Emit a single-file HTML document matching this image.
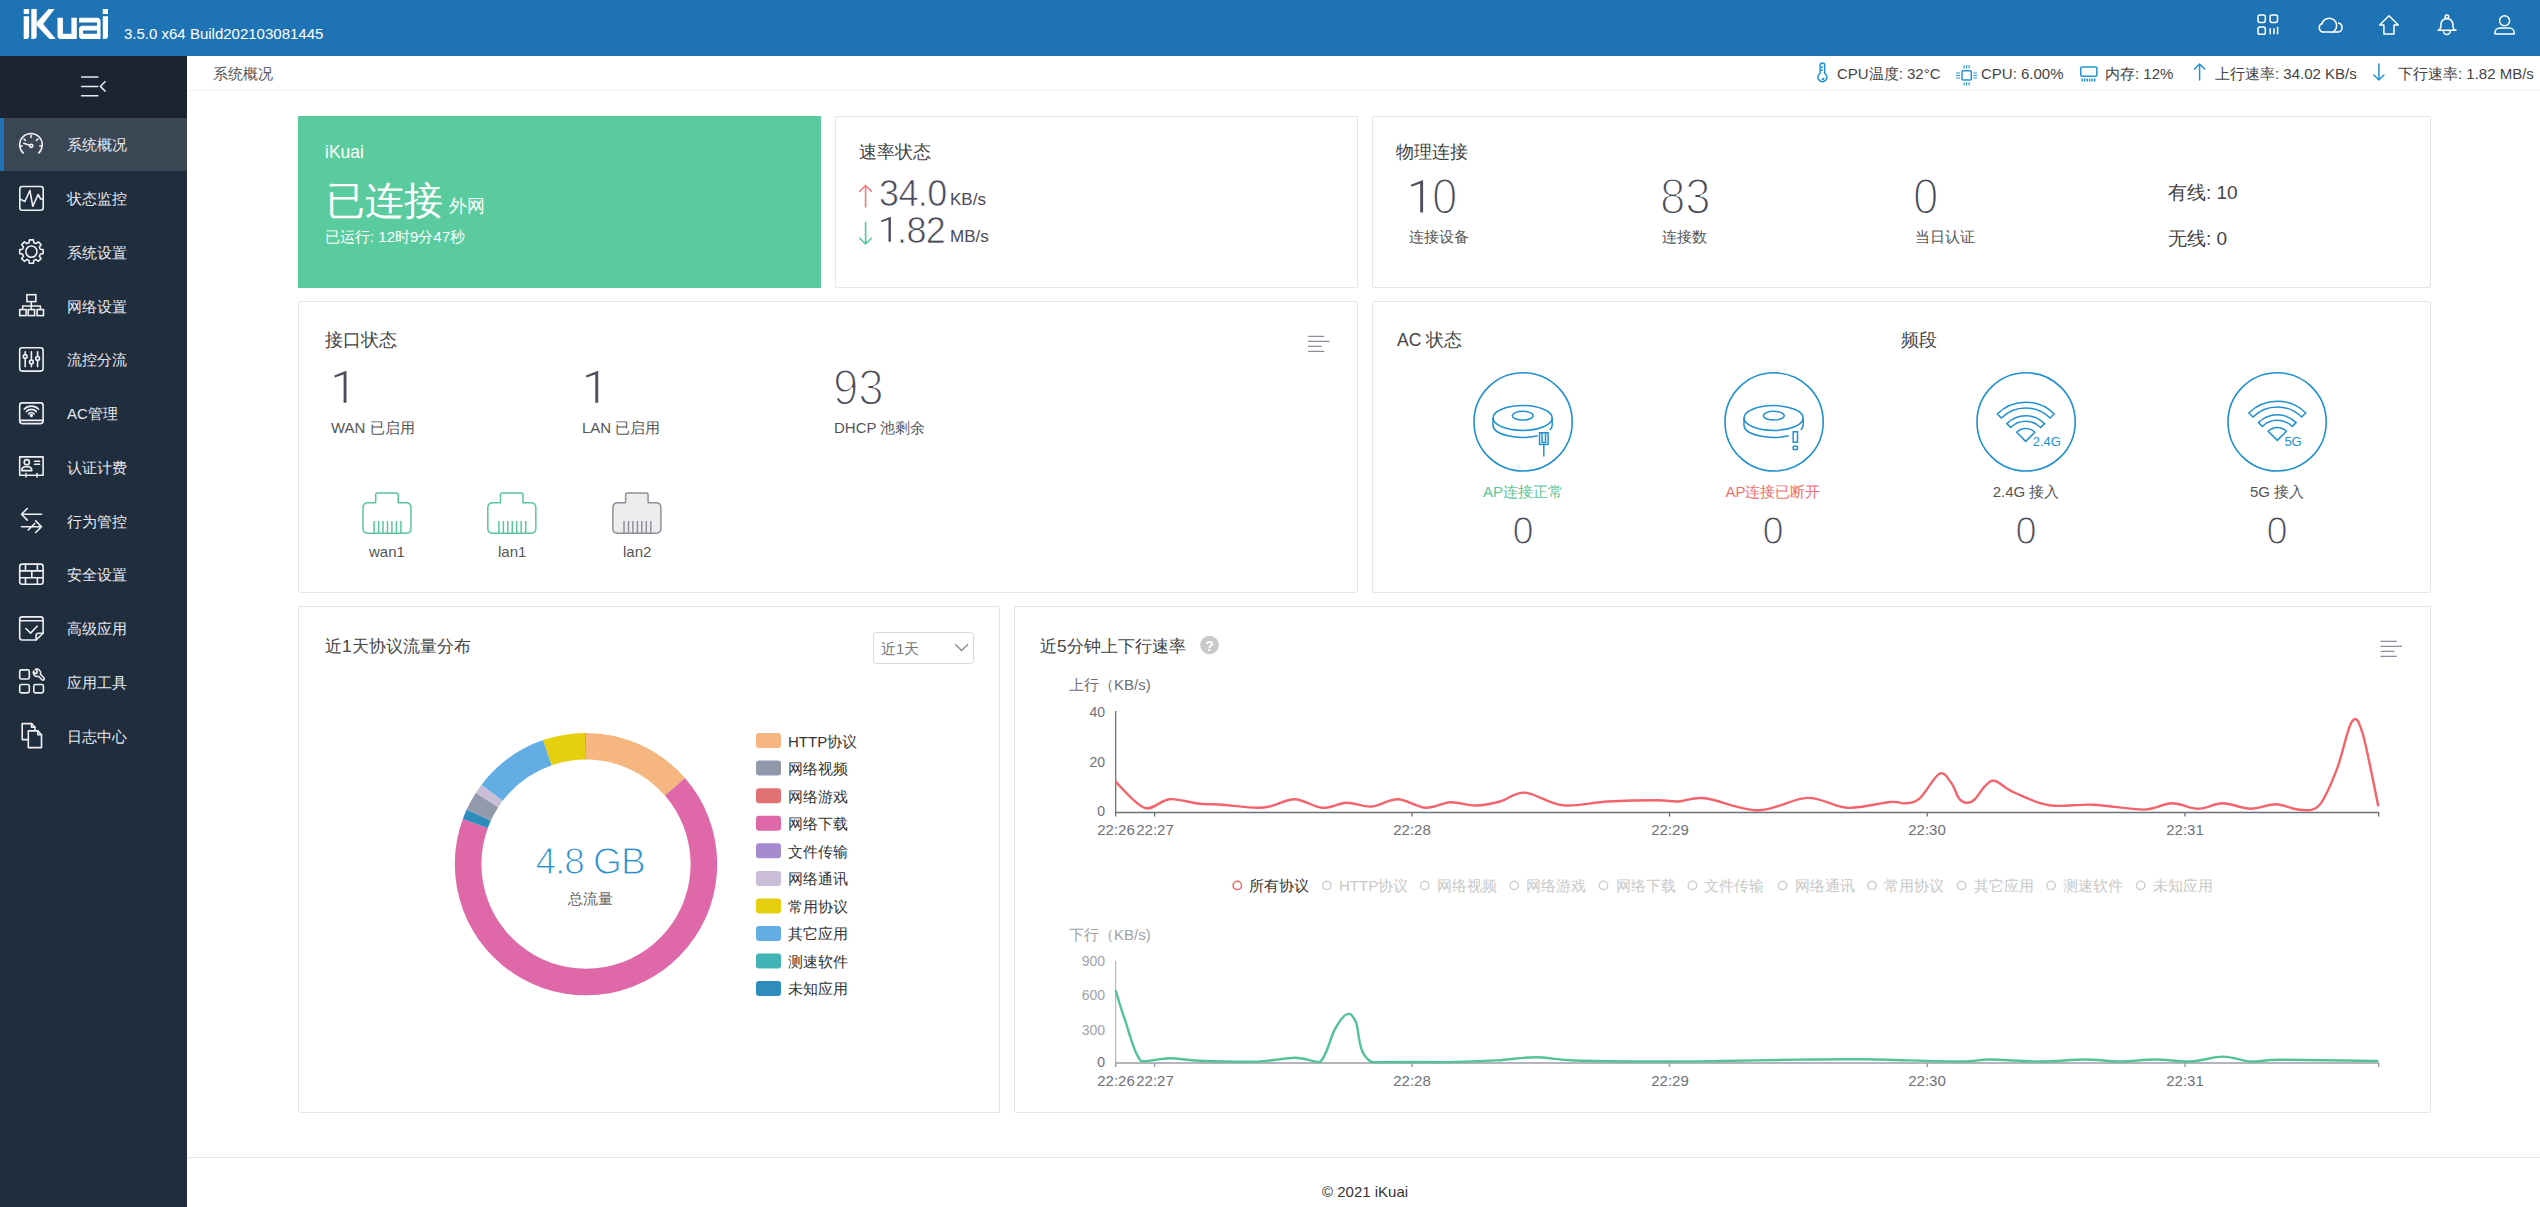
<!DOCTYPE html>
<html><head><meta charset="utf-8">
<style>
*{box-sizing:border-box;margin:0;padding:0}
html,body{width:2540px;height:1207px;overflow:hidden;background:#fff;font-family:"Liberation Sans",sans-serif;color:#333}
.a{position:absolute;white-space:nowrap}
#hdr{position:absolute;left:0;top:0;width:2540px;height:56px;background:#1e73b5}
#side{position:absolute;left:0;top:56px;width:187px;height:1151px;background:#202d3d}
#side .top{position:absolute;left:0;top:0;width:187px;height:62px;background:#1b2432}
.mi{position:absolute;left:0;width:187px;height:54px}
.mi.act{background:#3b4654}
.mi.act:before{content:"";position:absolute;left:0;top:0;width:4px;height:100%;background:#1e73b5}
.mi span{position:absolute;left:67px;top:18px;font-size:15px;line-height:15px;color:#e6e9ee}
.mi svg{position:absolute;left:17px;top:12px}
.card{position:absolute;border:1px solid #e6e6e6;border-radius:2px;background:#fff}
.ttl{position:absolute;font-size:17px;line-height:17px;color:#444}
</style></head><body>
<div id="hdr"></div>
<div id="side"><div class="top"></div></div>
<div class="a" style="left:0;top:118px;width:187px;height:53px;background:#3b4654"></div><div class="a" style="left:0;top:118px;width:4px;height:53px;background:#1e73b5"></div>
<div class="mi act" style="top:118.00px;height:53px"></div>
<div class="a" style="left:67px;top:137px;font-size:15px;line-height:15px;color:#e6e9ee">系统概况</div>
<div class="a" style="left:67px;top:191px;font-size:15px;line-height:15px;color:#e6e9ee">状态监控</div>
<div class="a" style="left:67px;top:245px;font-size:15px;line-height:15px;color:#e6e9ee">系统设置</div>
<div class="a" style="left:67px;top:299px;font-size:15px;line-height:15px;color:#e6e9ee">网络设置</div>
<div class="a" style="left:67px;top:352px;font-size:15px;line-height:15px;color:#e6e9ee">流控分流</div>
<div class="a" style="left:67px;top:406px;font-size:15px;line-height:15px;color:#e6e9ee">AC管理</div>
<div class="a" style="left:67px;top:460px;font-size:15px;line-height:15px;color:#e6e9ee">认证计费</div>
<div class="a" style="left:67px;top:514px;font-size:15px;line-height:15px;color:#e6e9ee">行为管控</div>
<div class="a" style="left:67px;top:567px;font-size:15px;line-height:15px;color:#e6e9ee">安全设置</div>
<div class="a" style="left:67px;top:621px;font-size:15px;line-height:15px;color:#e6e9ee">高级应用</div>
<div class="a" style="left:67px;top:675px;font-size:15px;line-height:15px;color:#e6e9ee">应用工具</div>
<div class="a" style="left:67px;top:729px;font-size:15px;line-height:15px;color:#e6e9ee">日志中心</div>

<!-- breadcrumb -->
<div class="a" style="left:188px;top:90px;width:2352px;height:1px;background:#f0f0f0"></div>
<div class="a" style="left:213px;top:66px;font-size:15px;line-height:15px;color:#555">系统概况</div>


<svg class="a" style="left:0;top:0" width="2540" height="1207" viewBox="0 0 2540 1207">
<!-- logo -->
<g fill="#fff">
<rect x="23.7" y="9" width="5.4" height="5"/>
<path d="M23.7,16.3H29.1V36Q29.1,39 26.1,39H23.7Z"/>
<path d="M31.3,9H36.7V36Q36.7,39 33.7,39H31.3Z"/>
<path d="M48.6,9H54.6L43.2,23.9L55.8,39H49.4L36.7,25.6V22.2Z"/>
<path d="M57.5,17.7H62.9V33.8H71.4V17.7H76.8V39H61Q57.5,39 57.5,35.5Z"/>
<path fill-rule="evenodd" d="M79,17.7H97Q100.5,17.7 100.5,21.2V39H82.5Q79,39 79,35.5V29.2Q79,25.7 82.5,25.7H97V22.6H79Z M83,30.5H97V33.8H83Z"/>
<rect x="102.8" y="9" width="5.2" height="5"/>
<path d="M102.8,16.3H108V36Q108,39 105,39H102.8Z"/>
</g>
<!-- header icons -->
<g fill="none" stroke="#fff" stroke-width="1.5" stroke-linejoin="round" stroke-linecap="round">
<rect x="2258" y="15" width="7.3" height="7.4" rx="1.8"/>
<rect x="2270.1" y="15" width="7.4" height="7.4" rx="1.8"/>
<rect x="2258" y="27.1" width="7.3" height="7.2" rx="1.8"/>
<path d="M2270.2,28.3V34.3M2274,28.3V34.3M2277.6,26.8V34.3" stroke-linecap="butt"/>
<path d="M2322.5,32.1A4.7,4.7 0 0 1 2321.9,23.4"/>
<path d="M2321.9,24.2A7.4,7.4 0 1 1 2332.8,32.1"/>
<path d="M2338.4,23A4.6,4.6 0 0 1 2337.4,32.1"/>
<path d="M2322.5,32.1H2337.4"/>
<path d="M2389,15.8L2398.3,25H2394V34H2383.9V25H2379.7Z"/>
<circle cx="2446.9" cy="16.8" r="1.8"/>
<path d="M2437.9,30.2H2456M2438.8,30.2Q2441,28.8 2441,24.3A5.9,5.9 0 0 1 2452.8,24.3Q2452.8,28.8 2455,30.2"/>
<path d="M2443.5,31A3.4,3.4 0 0 0 2450.3,31"/>
<circle cx="2504.6" cy="20.7" r="5"/>
<path d="M2495,34V32.5A5,4.5 0 0 1 2500,28H2509.2A5,4.5 0 0 1 2514.2,32.5V34Z"/>
</g>
<!-- status bar icons -->
<g fill="none" stroke="#2492d1" stroke-width="1.5" stroke-linecap="round" stroke-linejoin="round">
<path d="M1820.1,73.3V65.3A2.3,2.3 0 0 1 1824.7,65.3V73.3A4.5,4.5 0 1 1 1820.1,73.3Z"/>
<path d="M1820.8,67.3H1822.3M1820.8,70H1822.3M1823.8,78.2A1.8,1.8 0 0 1 1822,79.5"/>
<rect x="1962" y="70.8" width="9.3" height="9.2" rx="1"/>
<path d="M1964.1,65.2V68.6M1966.6,65.2V68.6M1969.1,65.2V68.6M1964.1,82.2V85.6M1966.6,82.2V85.6M1969.1,82.2V85.6M1956,73H1960M1956,75.5H1960M1956,78H1960M1973.3,73H1977M1973.3,75.5H1977M1973.3,78H1977" stroke-linecap="butt" stroke-width="1.1"/>
<rect x="2080.7" y="67" width="16.2" height="9.3" rx="1.5"/>
<path d="M2082.3,78.6V81.5M2084.8,78.6V81.5M2087.2,78.6V81.5M2089.7,78.6V81.5M2092.2,78.6V81.5M2094.7,78.6V81.5" stroke-linecap="butt"/>
<path d="M2199.6,64V80M2194.6,69L2199.6,64L2204.6,69"/>
<path d="M2378.9,64V80M2373.9,75L2378.9,80L2383.9,75"/>
</g>
<!-- sidebar collapse icon -->
<g fill="none" stroke="#e8eaee" stroke-width="1.5">
<path d="M81.1,77H98.4M81.1,86.4H98.4M81.1,95.8H98.4"/>
<path d="M105.5,81.3L100.4,86.4L105.5,91.5" stroke-linejoin="miter"/>
</g>
<!-- sidebar icons -->
<g fill="none" stroke="#eef0f3" stroke-width="1.6" stroke-linecap="round" stroke-linejoin="round">
<!-- gauge -->
<path d="M23,152.8A11.3,11.3 0 1 1 38.9,152.8"/>
<path d="M23,152.8L21.5,151.3M38.9,152.8L40.4,151.3M31,135.2V137.4M20,146H22.2M39.8,146H42M24,139L25.5,140.5M37.9,139L36.4,140.5M23.8,143.2L29.6,145.2"/>
<circle cx="31.2" cy="145.8" r="1.6"/>
<!-- monitor -->
<rect x="19.8" y="186.5" width="23.4" height="23.8" rx="2.5"/>
<path d="M19.8,199L24.9,201.5L29.9,190.5L32.8,206.3L38.1,194.5L40.6,199H43.2"/>
<!-- gear -->
<path d="M29.0,242.7 L29.4,239.9 L33.4,239.9 L33.8,242.7 L36.0,243.6 L38.4,241.9 L41.1,244.6 L39.4,247.0 L40.3,249.2 L43.1,249.6 L43.1,253.6 L40.3,254.0 L39.4,256.2 L41.1,258.6 L38.4,261.3 L36.0,259.6 L33.8,260.5 L33.4,263.3 L29.4,263.3 L29.0,260.5 L26.8,259.6 L24.4,261.3 L21.7,258.6 L23.4,256.2 L22.5,254.0 L19.7,253.6 L19.7,249.6 L22.5,249.2 L23.4,247.0 L21.7,244.6 L24.4,241.9 L26.8,243.6Z"/>
<circle cx="31.4" cy="251.6" r="5.6"/>
<!-- network -->
<rect x="26.9" y="294.7" width="8.9" height="6.9" stroke-linejoin="miter"/>
<path d="M31.3,301.6V306M22.7,309.6V306H40.4V309.6M31.3,306V309.6" stroke-linecap="butt"/>
<rect x="19.7" y="309.6" width="6.4" height="6" stroke-linejoin="miter"/>
<rect x="28.2" y="309.6" width="6.4" height="6" stroke-linejoin="miter"/>
<rect x="37.1" y="309.6" width="6.4" height="6" stroke-linejoin="miter"/>
<!-- sliders -->
<rect x="19.7" y="347.7" width="23.4" height="23.4" rx="2.5"/>
<path d="M25.2,351.8V354.6M25.2,358.4V366.6M31.4,351.8V360M31.4,364V366.6M37.6,351.8V356.4M37.6,360.4V366.6"/>
<circle cx="25.2" cy="356.5" r="1.9"/>
<circle cx="31.4" cy="362" r="1.9"/>
<circle cx="37.6" cy="358.4" r="1.9"/>
<!-- AC -->
<rect x="19.7" y="402.9" width="23.4" height="20.7" rx="2.5"/>
<path d="M19.7,420.4H43.1"/>
<path d="M24.2,409.2A10,10 0 0 1 38.6,409.2M26.4,411.6A6.8,6.8 0 0 1 36.4,411.6M28.6,413.9A3.6,3.6 0 0 1 34.2,413.9"/>
<circle cx="31.4" cy="415.5" r="0.9"/>
<!-- id card -->
<path d="M24.5,475.3H19.7V456.9H43.1V475.3H38.5M27.5,475.3H35.5M26,473.5V477M37,473.5V477"/>
<circle cx="26.8" cy="462.2" r="2.6"/>
<path d="M21.8,470.6Q21.8,467.4 24.6,466.8H29Q31.8,467.4 31.8,470.6Z"/>
<path d="M34.6,461.2H39.6M34.6,464.3H39.6"/>
<!-- arrows -->
<path d="M21.5,514.3H41.5M27.3,508.5L21.5,514.3L27.3,520.1M21.5,526.7H41.5M35.7,520.9L41.5,526.7L35.7,532.5M28.2,530L34.7,523.5"/>
<!-- brick -->
<rect x="19.7" y="564.1" width="23.4" height="20.1" rx="2.5"/>
<path d="M19.7,570.9H43.1M19.7,577.7H43.1M25.5,564.1V570.9M37.4,564.1V570.9M31.8,570.9V577.7M25.5,577.7V584.2M37.4,577.7V584.2"/>
<!-- calendar -->
<path d="M22.2,616.9H40.6Q43.1,616.9 43.1,619.4V633.2L36.1,640H22.2Q19.7,640 19.7,637.5V619.4Q19.7,616.9 22.2,616.9Z"/>
<path d="M19.7,620.7H43.1M36.1,640V635.6Q36.1,633.2 38.5,633.2H43.1M25.9,628.5L30.6,633.1L37.2,626.2"/>
<!-- apps -->
<rect x="19.7" y="669.9" width="9.6" height="9.1" rx="1.6"/>
<rect x="19.7" y="684.5" width="9.6" height="8.4" rx="1.6"/>
<rect x="33.8" y="684.5" width="9.6" height="8.4" rx="1.6"/>
<path d="M35.4,669.3L37.3,671.6L36.6,673.4L34.4,673.1L33.6,670.9A4,4 0 0 0 38.5,676.3L41.9,679.7A1.4,1.4 0 0 0 43.9,677.7L40.5,674.3A4,4 0 0 0 35.4,669.3Z"/>
<!-- docs -->
<path d="M27.9,739.6H22.2V723.6H31.5L35,727.2V730.6"/>
<path d="M31.5,723.6V727.2H35" />
<path d="M28.3,730.9H37.8L41.5,734.7V747.6H28.3Z"/>
<path d="M37.8,730.9V734.7H41.5"/>
</g>
</svg>

<div class="a" style="left:124px;top:26px;font-size:15px;line-height:15px;color:#fff">3.5.0 x64 Build202103081445</div>
<div class="a" style="left:1837px;top:66px;font-size:15px;line-height:15px;color:#444">CPU温度: 32°C</div>
<div class="a" style="left:1981px;top:66px;font-size:15px;line-height:15px;color:#444">CPU: 6.00%</div>
<div class="a" style="left:2105px;top:66px;font-size:15px;line-height:15px;color:#444">内存: 12%</div>
<div class="a" style="left:2215px;top:66px;font-size:15px;line-height:15px;color:#444">上行速率: 34.02 KB/s</div>
<div class="a" style="left:2398px;top:66px;font-size:15px;line-height:15px;color:#444">下行速率: 1.82 MB/s</div>

<!-- cards -->
<div class="a" style="left:298px;top:116px;width:523px;height:172px;background:#5acb9e"></div>
<div class="card" style="left:835px;top:116px;width:523px;height:172px"></div>
<div class="card" style="left:1372px;top:116px;width:1059px;height:172px"></div>
<div class="card" style="left:298px;top:301px;width:1060px;height:292px"></div>
<div class="card" style="left:1372px;top:301px;width:1059px;height:292px"></div>
<div class="card" style="left:298px;top:606px;width:702px;height:507px"></div>
<div class="card" style="left:1014px;top:606px;width:1417px;height:507px"></div>


<!-- row1 content -->
<div class="a" style="left:325px;top:143px;font-size:17.5px;line-height:18px;color:#fff">iKuai</div>
<div class="a" style="left:326px;top:181px;font-size:39px;line-height:40px;color:#fff">已连接</div>
<div class="a" style="left:449px;top:197px;font-size:18px;line-height:18px;color:#fff">外网</div>
<div class="a" style="left:325px;top:229px;font-size:15px;line-height:15px;color:#fff">已运行: 12时9分47秒</div>

<div class="a" style="left:859px;top:144px;font-size:17.5px;line-height:17px;color:#444">速率状态</div>
<div class="a" style="left:879px;top:176px;font-size:36px;line-height:36px;color:#4a4a57;-webkit-text-stroke:0.7px #fff;letter-spacing:-0.6px">34.0</div>
<div class="a" style="left:950px;top:191px;font-size:17px;line-height:17px;color:#4a4a57">KB/s</div>
<div class="a" style="left:897px;top:213px;font-size:36px;line-height:36px;color:#4a4a57;-webkit-text-stroke:0.7px #fff;letter-spacing:-0.6px">.82</div>
<div class="a" style="left:950px;top:228px;font-size:17px;line-height:17px;color:#4a4a57">MB/s</div>

<div class="a" style="left:1396px;top:144px;font-size:17.5px;line-height:17px;color:#444">物理连接</div>
<div class="a" style="left:1432.4px;top:171px;font-size:47px;line-height:47px;color:#4a4a57;-webkit-text-stroke:1.7px #fff;transform:scale(0.97,1.07);transform-origin:0 0">0</div>
<div class="a" style="left:1409px;top:229px;font-size:15px;line-height:15px;color:#555">连接设备</div>
<div class="a" style="left:1660px;top:171px;font-size:47px;line-height:47px;color:#4a4a57;-webkit-text-stroke:1.7px #fff;transform:scale(0.97,1.07);transform-origin:0 0">83</div>
<div class="a" style="left:1662px;top:229px;font-size:15px;line-height:15px;color:#555">连接数</div>
<div class="a" style="left:1913px;top:171px;font-size:47px;line-height:47px;color:#4a4a57;-webkit-text-stroke:1.7px #fff;transform:scale(0.97,1.07);transform-origin:0 0">0</div>
<div class="a" style="left:1915px;top:229px;font-size:15px;line-height:15px;color:#555">当日认证</div>
<div class="a" style="left:2168px;top:183px;font-size:19px;line-height:19px;color:#444">有线: 10</div>
<div class="a" style="left:2168px;top:229px;font-size:19px;line-height:19px;color:#444">无线: 0</div>

<svg class="a" style="left:0;top:0" width="2540" height="1207" viewBox="0 0 2540 1207">
<g fill="none" stroke-width="1.6" stroke-linecap="round" stroke-linejoin="round">
<path stroke="#f07a80" d="M865.6,185.5V207M859.8,191.3L865.6,185.5L871.4,191.3"/>
<path stroke="#5ac79b" d="M865.6,222.5V244M859.8,238.2L865.6,244L871.4,238.2"/>
</g>
</svg>


<!-- row2 left -->
<svg class="a" style="left:0;top:0" width="2540" height="1207" viewBox="0 0 2540 1207"><path fill="#4f4f5c" d="M343.6,402.7V374.4L334.8,377.6L334.3,375.5L345.7,371.0H346.5V402.7ZM595.3,402.7V374.4L586.5,377.6L586.0,375.5L597.4,371.0H598.2V402.7ZM1420.2,212.4V183.6L1411.4,186.8L1410.9,184.7L1422.3,180.2H1423.1V212.4ZM888.5,241.8V219.7L881.5,222.3L881.1,220.6L890.2,217.0H890.9V241.8Z"/></svg>

<div class="a" style="left:325px;top:332px;font-size:17.5px;line-height:17px;color:#444">接口状态</div>
<div class="a" style="left:331px;top:420px;font-size:15px;line-height:15px;color:#555">WAN 已启用</div>
<div class="a" style="left:582px;top:420px;font-size:15px;line-height:15px;color:#555">LAN 已启用</div>
<div class="a" style="left:833px;top:362px;font-size:47px;line-height:47px;color:#4a4a57;-webkit-text-stroke:1.7px #fff;transform:scale(0.97,1.07);transform-origin:0 0">93</div>
<div class="a" style="left:834px;top:420px;font-size:15px;line-height:15px;color:#555">DHCP 池剩余</div>
<div class="a" style="left:369px;top:544px;font-size:15px;line-height:15px;color:#555">wan1</div>
<div class="a" style="left:498px;top:544px;font-size:15px;line-height:15px;color:#555">lan1</div>
<div class="a" style="left:623px;top:544px;font-size:15px;line-height:15px;color:#555">lan2</div>
<!-- row2 right -->
<div class="a" style="left:1397px;top:332px;font-size:17.5px;line-height:17px;color:#444">AC 状态</div>
<div class="a" style="left:1901px;top:332px;font-size:17.5px;line-height:17px;color:#444">频段</div>
<div class="a" style="left:1473px;top:484px;width:100px;text-align:center;font-size:15px;line-height:15px;color:#5ac79b">AP连接正常</div>
<div class="a" style="left:1723px;top:484px;width:100px;text-align:center;font-size:15px;line-height:15px;color:#f06e6e">AP连接已断开</div>
<div class="a" style="left:1976px;top:484px;width:100px;text-align:center;font-size:15px;line-height:15px;color:#555">2.4G 接入</div>
<div class="a" style="left:2227px;top:484px;width:100px;text-align:center;font-size:15px;line-height:15px;color:#555">5G 接入</div>
<div class="a" style="left:1473px;top:512px;width:100px;text-align:center;font-size:38px;line-height:38px;color:#4a4a57;-webkit-text-stroke:1.2px #fff">0</div>
<div class="a" style="left:1723px;top:512px;width:100px;text-align:center;font-size:38px;line-height:38px;color:#4a4a57;-webkit-text-stroke:1.2px #fff">0</div>
<div class="a" style="left:1976px;top:512px;width:100px;text-align:center;font-size:38px;line-height:38px;color:#4a4a57;-webkit-text-stroke:1.2px #fff">0</div>
<div class="a" style="left:2227px;top:512px;width:100px;text-align:center;font-size:38px;line-height:38px;color:#4a4a57;-webkit-text-stroke:1.2px #fff">0</div>
<svg class="a" style="left:0;top:0" width="2540" height="1207" viewBox="0 0 2540 1207"><g transform="translate(362.3,492.3)" fill="#fff" stroke="#5ac79b" stroke-width="1.5" stroke-linejoin="round"><path d="M13.4,10.5V2.5Q13.4,0.8 15.1,0.8H34.2Q35.9,0.8 35.9,2.5V10.5H43.7Q48.7,10.5 48.7,15.5V36.3Q48.7,40.9 44.1,40.9H5.3Q0.7,40.9 0.7,36.3V15.5Q0.7,10.5 5.7,10.5Z"/><path fill="none" d="M11.8,28.6V40.9M16.3,28.6V40.9M20.7,28.6V40.9M25.2,28.6V40.9M29.6,28.6V40.9M34.1,28.6V40.9M38.6,28.6V40.9"/></g><g transform="translate(487.1,492.3)" fill="#fff" stroke="#5ac79b" stroke-width="1.5" stroke-linejoin="round"><path d="M13.4,10.5V2.5Q13.4,0.8 15.1,0.8H34.2Q35.9,0.8 35.9,2.5V10.5H43.7Q48.7,10.5 48.7,15.5V36.3Q48.7,40.9 44.1,40.9H5.3Q0.7,40.9 0.7,36.3V15.5Q0.7,10.5 5.7,10.5Z"/><path fill="none" d="M11.8,28.6V40.9M16.3,28.6V40.9M20.7,28.6V40.9M25.2,28.6V40.9M29.6,28.6V40.9M34.1,28.6V40.9M38.6,28.6V40.9"/></g><g transform="translate(612.2,492.3)" fill="#ededed" stroke="#8e909c" stroke-width="1.5" stroke-linejoin="round"><path d="M13.4,10.5V2.5Q13.4,0.8 15.1,0.8H34.2Q35.9,0.8 35.9,2.5V10.5H43.7Q48.7,10.5 48.7,15.5V36.3Q48.7,40.9 44.1,40.9H5.3Q0.7,40.9 0.7,36.3V15.5Q0.7,10.5 5.7,10.5Z"/><path fill="none" d="M11.8,28.6V40.9M16.3,28.6V40.9M20.7,28.6V40.9M25.2,28.6V40.9M29.6,28.6V40.9M34.1,28.6V40.9M38.6,28.6V40.9"/></g><g stroke="#8a8d9d" stroke-width="1.2"><path d="M1308.1,336.4H1324.3M1308.1,341.4H1329.5M1308.1,346.4H1321.8M1308.1,351.3H1324.3"/></g><circle cx="1523.1" cy="421.9" r="49.1" fill="none" stroke="#2190cf" stroke-width="1.6"/><circle cx="1774.1" cy="421.9" r="49.1" fill="none" stroke="#2190cf" stroke-width="1.6"/><circle cx="2026.1" cy="421.9" r="49.1" fill="none" stroke="#2190cf" stroke-width="1.6"/><circle cx="2277.1" cy="421.9" r="49.1" fill="none" stroke="#2190cf" stroke-width="1.6"/></svg>
<svg class="a" style="left:0;top:0" width="2540" height="1207" viewBox="0 0 2540 1207"><g transform="translate(1473.2,372.1)" fill="none" stroke="#2190cf" stroke-width="1.5"><ellipse cx="49.4" cy="45.9" rx="29.6" ry="12.4"/><ellipse cx="49.6" cy="43.6" rx="10.4" ry="4.4"/><path d="M19.8,45.9V53A29.6,12.3 0 0 0 64.5,63.6M79,45.9V53A29.6,12.3 0 0 1 76.6,57.9"/><rect x="66.35" y="60.65" width="8.5" height="11.7"/><path d="M68.9,60.65V70.3H72.3V60.65M70.6,72.35V84.5"/></g><g transform="translate(1724.2,372.1)" fill="none" stroke="#2190cf" stroke-width="1.5"><ellipse cx="49.4" cy="45.9" rx="29.6" ry="12.4"/><ellipse cx="49.6" cy="43.6" rx="10.4" ry="4.4"/><path d="M19.8,45.9V53A29.6,12.3 0 0 0 64.5,63.6M79,45.9V53A29.6,12.3 0 0 1 76.6,57.9"/><rect x="69" y="59.7" width="4.3" height="10.4"/><rect x="69" y="74.2" width="4.3" height="3.2" rx="0.8"/></g><g transform="translate(1976.2,372.1)" fill="none" stroke="#2190cf" stroke-width="1.5" stroke-linejoin="miter"><path d="M21.04,41.84A40.25,40.25 0 0 1 77.96,41.84L73.86,45.94A34.45,34.45 0 0 0 25.14,45.94ZM30.73,51.53A26.55,26.55 0 0 1 68.27,51.53L64.46,55.34A21.15,21.15 0 0 0 34.54,55.34ZM49.50,69.30L40.41,60.21A12.85,12.85 0 0 1 58.59,60.21Z"/><text x="56.5" y="74.4" fill="#2190cf" stroke="none" font-family="Liberation Sans" font-size="13">2.4G</text></g><g transform="translate(2227.2,372.1)" fill="none" stroke="#2190cf" stroke-width="1.5" stroke-linejoin="miter"><path d="M21.64,40.84A40.25,40.25 0 0 1 78.56,40.84L74.46,44.94A34.45,34.45 0 0 0 25.74,44.94ZM31.33,50.53A26.55,26.55 0 0 1 68.87,50.53L65.06,54.34A21.15,21.15 0 0 0 35.14,54.34ZM50.10,68.30L41.01,59.21A12.85,12.85 0 0 1 59.19,59.21Z"/><text x="57.2" y="73.5" fill="#2190cf" stroke="none" font-family="Liberation Sans" font-size="13">5G</text></g></svg>
<!-- row3 -->
<svg class="a" style="left:0;top:0" width="2540" height="1207" viewBox="0 0 2540 1207">
<path fill="#f5b77f" d="M586.00,732.90A131.2,131.2 0 0 1 685.02,778.03L664.94,795.48A104.6,104.6 0 0 0 586.00,759.50Z"/>
<path fill="#de68a8" d="M685.02,778.03A131.2,131.2 0 1 1 462.79,819.01L487.77,828.15A104.6,104.6 0 1 0 664.94,795.48Z"/>
<path fill="#2f8dbd" d="M462.79,819.01A131.2,131.2 0 0 1 466.71,809.48L490.89,820.56A104.6,104.6 0 0 0 487.77,828.15Z"/>
<path fill="#9299aa" d="M466.71,809.48A131.2,131.2 0 0 1 475.97,792.64L498.28,807.13A104.6,104.6 0 0 0 490.89,820.56Z"/>
<path fill="#c9bdd8" d="M475.97,792.64A131.2,131.2 0 0 1 481.50,784.78L502.68,800.86A104.6,104.6 0 0 0 498.28,807.13Z"/>
<path fill="#62ade4" d="M481.50,784.78A131.2,131.2 0 0 1 543.07,740.12L551.77,765.26A104.6,104.6 0 0 0 502.68,800.86Z"/>
<path fill="#e5cf0e" d="M543.07,740.12A131.2,131.2 0 0 1 585.08,732.90L585.27,759.50A104.6,104.6 0 0 0 551.77,765.26Z"/>
<path fill="#a58fcf" d="M585.08,732.90A131.2,131.2 0 0 1 586.00,732.90L586.00,759.50A104.6,104.6 0 0 0 585.27,759.50Z"/>
<rect x="756" y="733.1" width="25" height="15" rx="3" fill="#f5b77f"/>
<rect x="756" y="760.6" width="25" height="15" rx="3" fill="#9299aa"/>
<rect x="756" y="788.2" width="25" height="15" rx="3" fill="#e07274"/>
<rect x="756" y="815.8" width="25" height="15" rx="3" fill="#de68a8"/>
<rect x="756" y="843.3" width="25" height="15" rx="3" fill="#a68bd0"/>
<rect x="756" y="870.9" width="25" height="15" rx="3" fill="#c9bdd8"/>
<rect x="756" y="898.4" width="25" height="15" rx="3" fill="#e5cf0e"/>
<rect x="756" y="926.0" width="25" height="15" rx="3" fill="#62ade4"/>
<rect x="756" y="953.5" width="25" height="15" rx="3" fill="#41b3b6"/>
<rect x="756" y="981.1" width="25" height="15" rx="3" fill="#2f8dbd"/>
<rect x="873.5" y="632.5" width="100" height="31" rx="3" fill="#fff" stroke="#d9d9d9" stroke-width="1"/>
<path d="M955.2,644.2L961.6,650.5L968,644.2" fill="none" stroke="#8a8d9a" stroke-width="1.5"/>
<circle cx="1209.5" cy="645" r="9.3" fill="#c8c9cb"/>
<text x="1209.5" y="650.5" text-anchor="middle" fill="#fff" font-family="Liberation Sans" font-weight="bold" font-size="14">?</text>
<g stroke="#8a8d9d" stroke-width="1.2"><path d="M2380.6,641.4H2396.8M2380.6,646.4H2402M2380.6,651.4H2394.3M2380.6,656.3H2396.8"/></g>
<path d="M1115.7,711V812.5M1115.2,812.5H2379M1115.7,812V816.5M1154.6,812V816.5M1412,812V816.5M1669.5,812V816.5M1927.2,812V816.5M2185,812V816.5M2378.7,812V816.5" fill="none" stroke="#6e7079" stroke-width="1.3"/>
<path d="M1115.7,961V1063" fill="none" stroke="#a8aab2" stroke-width="1"/>
<path d="M1115.2,1063H2379M1115.7,1063V1067M1154.6,1063V1067M1412,1063V1067M1669.5,1063V1067M1927.2,1063V1067M2185,1063V1067M2378.7,1063V1067" fill="none" stroke="#9a9ca6" stroke-width="1.5"/>
<path d="M1115.7,781.8C1120.5,786.1 1135.6,804.9 1144.6,807.8C1153.5,810.7 1160.3,799.9 1169.4,799.2C1178.5,798.5 1190.9,802.9 1199.2,803.8C1207.5,804.7 1209.3,803.8 1219.0,804.5C1228.7,805.2 1248.3,807.6 1257.1,807.8C1265.9,808.0 1265.7,807.2 1272.0,805.8C1278.3,804.4 1286.7,798.9 1295.1,799.2C1303.5,799.5 1313.9,807.2 1322.4,807.8C1331.0,808.4 1338.3,803.0 1346.4,802.8C1354.5,802.6 1362.7,807.2 1371.2,806.6C1379.7,806.0 1388.5,799.0 1397.6,799.2C1406.7,799.4 1416.9,807.3 1425.7,807.8C1434.5,808.3 1442.2,802.6 1450.5,802.2C1458.8,801.8 1467.0,805.6 1475.3,805.5C1483.5,805.4 1491.8,803.6 1500.0,801.5C1508.2,799.4 1514.3,792.0 1524.8,792.6C1535.3,793.2 1549.0,803.8 1562.8,805.3C1576.6,806.8 1591.8,802.3 1607.5,801.5C1623.2,800.7 1645.2,800.3 1657.0,800.3C1668.8,800.3 1670.6,801.9 1678.6,801.5C1686.6,801.1 1691.8,796.7 1705.0,798.2C1718.2,799.7 1740.9,810.3 1758.0,810.3C1775.1,810.2 1792.6,798.3 1807.5,797.9C1822.4,797.5 1833.4,807.1 1847.2,807.8C1861.0,808.5 1880.4,802.8 1890.2,802.0C1900.0,801.2 1901.0,803.9 1905.9,803.3C1910.8,802.7 1914.1,803.3 1919.7,798.4C1925.3,793.5 1934.2,776.4 1939.4,773.8C1944.7,771.2 1947.9,778.6 1951.2,782.7C1954.5,786.8 1956.4,795.0 1959.0,798.4C1961.6,801.8 1964.3,802.6 1966.9,802.8C1969.5,803.0 1971.8,802.1 1974.8,799.4C1977.8,796.7 1981.3,789.7 1984.6,786.6C1987.9,783.5 1989.6,779.7 1994.5,780.7C1999.4,781.7 2005.0,788.4 2014.2,792.5C2023.4,796.6 2036.5,803.3 2049.6,805.3C2062.7,807.3 2077.2,804.0 2092.9,804.7C2108.7,805.4 2131.0,809.8 2144.1,809.6C2157.2,809.4 2162.7,803.4 2171.7,803.3C2180.7,803.1 2189.7,808.7 2198.2,808.7C2206.7,808.7 2214.1,803.3 2222.8,803.3C2231.5,803.3 2241.5,808.5 2250.4,808.7C2259.3,808.9 2267.8,804.1 2276.0,804.3C2284.2,804.5 2292.4,809.6 2299.6,809.8C2306.8,810.0 2313.1,812.1 2319.3,805.3C2325.5,798.5 2331.6,782.8 2337.0,768.9C2342.4,755.0 2347.5,727.6 2351.8,721.7C2356.1,715.8 2358.2,719.4 2362.6,733.5C2367.0,747.6 2375.7,794.2 2378.3,806.3" fill="none" stroke="#f3636b" stroke-width="2.4" stroke-linejoin="round"/>
<path d="M1115.7,990.5C1117.2,995.3 1120.5,1007.6 1124.8,1019.4C1129.1,1031.2 1133.9,1054.6 1141.3,1061.1C1148.7,1062.0 1159.8,1058.3 1169.4,1058.3C1179.1,1058.2 1184.6,1060.2 1199.2,1060.8C1213.8,1061.3 1241.1,1062.0 1257.1,1061.6C1273.1,1061.1 1284.6,1057.7 1295.1,1057.8C1305.6,1057.9 1313.3,1062.0 1319.9,1062.1C1326.5,1057.4 1330.4,1037.3 1334.8,1029.4C1339.2,1021.5 1343.0,1015.9 1346.4,1014.5C1349.9,1013.1 1351.2,1013.2 1355.5,1021.1C1359.8,1029.0 1356.7,1055.3 1372.0,1062.1C1387.3,1062.0 1426.4,1062.0 1447.2,1062.1C1468.0,1061.8 1482.1,1061.2 1496.8,1060.4C1511.5,1059.6 1522.4,1057.2 1535.4,1057.2C1548.4,1057.2 1555.9,1059.8 1575.0,1060.5C1594.1,1061.2 1625.8,1061.4 1650.0,1061.5C1674.2,1061.6 1695.3,1061.3 1720.0,1061.0C1744.7,1060.7 1774.1,1059.9 1798.0,1059.6C1821.9,1059.3 1836.8,1059.0 1863.6,1059.3C1890.4,1059.6 1938.0,1061.5 1959.0,1061.5C1980.0,1061.5 1975.9,1059.5 1989.3,1059.5C2002.7,1059.5 2023.7,1061.5 2039.6,1061.5C2055.5,1061.5 2071.5,1059.5 2084.9,1059.5C2098.3,1059.5 2108.3,1061.5 2120.0,1061.5C2131.7,1061.5 2143.6,1059.5 2155.3,1059.5C2167.1,1059.5 2179.2,1062.0 2190.5,1061.5C2201.8,1061.0 2213.1,1056.6 2223.2,1056.6C2233.3,1056.6 2241.3,1061.0 2250.9,1061.5C2260.5,1062.0 2259.8,1059.9 2281.0,1059.8C2302.2,1059.7 2362.1,1060.8 2378.3,1061.0" fill="none" stroke="#52c397" stroke-width="2.4" stroke-linejoin="round"/>
<circle cx="1237.3" cy="885.4" r="4.2" fill="none" stroke="#f0686e" stroke-width="1.5"/>
<circle cx="1326.9" cy="885.4" r="4.2" fill="none" stroke="#cfcfcf" stroke-width="1.5"/>
<circle cx="1424.7" cy="885.4" r="4.2" fill="none" stroke="#cfcfcf" stroke-width="1.5"/>
<circle cx="1514.3" cy="885.4" r="4.2" fill="none" stroke="#cfcfcf" stroke-width="1.5"/>
<circle cx="1603.5" cy="885.4" r="4.2" fill="none" stroke="#cfcfcf" stroke-width="1.5"/>
<circle cx="1692.4" cy="885.4" r="4.2" fill="none" stroke="#cfcfcf" stroke-width="1.5"/>
<circle cx="1782.6" cy="885.4" r="4.2" fill="none" stroke="#cfcfcf" stroke-width="1.5"/>
<circle cx="1872.0" cy="885.4" r="4.2" fill="none" stroke="#cfcfcf" stroke-width="1.5"/>
<circle cx="1961.5" cy="885.4" r="4.2" fill="none" stroke="#cfcfcf" stroke-width="1.5"/>
<circle cx="2051.1" cy="885.4" r="4.2" fill="none" stroke="#cfcfcf" stroke-width="1.5"/>
<circle cx="2140.7" cy="885.4" r="4.2" fill="none" stroke="#cfcfcf" stroke-width="1.5"/>
</svg>
<div class="a" style="left:325px;top:638px;font-size:17.3px;line-height:17.3px;color:#444;">近1天协议流量分布</div>
<div class="a" style="left:1040px;top:638px;font-size:17.3px;line-height:17.3px;color:#444;">近5分钟上下行速率</div>
<div class="a" style="left:881px;top:641px;font-size:15px;line-height:15px;color:#777;">近1天</div>
<div class="a" style="left:788px;top:734px;font-size:15px;line-height:15px;color:#333;">HTTP协议</div>
<div class="a" style="left:788px;top:761px;font-size:15px;line-height:15px;color:#333;">网络视频</div>
<div class="a" style="left:788px;top:789px;font-size:15px;line-height:15px;color:#333;">网络游戏</div>
<div class="a" style="left:788px;top:816px;font-size:15px;line-height:15px;color:#333;">网络下载</div>
<div class="a" style="left:788px;top:844px;font-size:15px;line-height:15px;color:#333;">文件传输</div>
<div class="a" style="left:788px;top:871px;font-size:15px;line-height:15px;color:#333;">网络通讯</div>
<div class="a" style="left:788px;top:899px;font-size:15px;line-height:15px;color:#333;">常用协议</div>
<div class="a" style="left:788px;top:926px;font-size:15px;line-height:15px;color:#333;">其它应用</div>
<div class="a" style="left:788px;top:954px;font-size:15px;line-height:15px;color:#333;">测速软件</div>
<div class="a" style="left:788px;top:981px;font-size:15px;line-height:15px;color:#333;">未知应用</div>
<div class="a" style="left:490px;top:843px;width:200px;text-align:center;font-size:37px;line-height:37px;color:#2a8fcc;-webkit-text-stroke:1.1px #fff;letter-spacing:-1px">4.8 GB</div>
<div class="a" style="left:490px;top:891px;width:200px;text-align:center;font-size:15px;line-height:15px;color:#666">总流量</div>
<div class="a" style="left:1069px;top:677px;font-size:15px;line-height:15px;color:#6e7079;">上行（KB/s)</div>
<div class="a" style="left:1069px;top:927px;font-size:15px;line-height:15px;color:#a0a2aa;">下行（KB/s)</div>
<div class="a" style="left:1045px;top:705px;width:60px;text-align:right;font-size:14px;line-height:14px;color:#6e7079">40</div>
<div class="a" style="left:1045px;top:755px;width:60px;text-align:right;font-size:14px;line-height:14px;color:#6e7079">20</div>
<div class="a" style="left:1045px;top:804px;width:60px;text-align:right;font-size:14px;line-height:14px;color:#6e7079">0</div>
<div class="a" style="left:1045px;top:954px;width:60px;text-align:right;font-size:14px;line-height:14px;color:#a0a2aa">900</div>
<div class="a" style="left:1045px;top:988px;width:60px;text-align:right;font-size:14px;line-height:14px;color:#a0a2aa">600</div>
<div class="a" style="left:1045px;top:1023px;width:60px;text-align:right;font-size:14px;line-height:14px;color:#a0a2aa">300</div>
<div class="a" style="left:1045px;top:1055px;width:60px;text-align:right;font-size:14px;line-height:14px;color:#6e7079">0</div>
<div class="a" style="left:1076px;top:822px;width:80px;text-align:center;font-size:15px;line-height:15px;color:#6e7079">22:26</div>
<div class="a" style="left:1115px;top:822px;width:80px;text-align:center;font-size:15px;line-height:15px;color:#6e7079">22:27</div>
<div class="a" style="left:1372px;top:822px;width:80px;text-align:center;font-size:15px;line-height:15px;color:#6e7079">22:28</div>
<div class="a" style="left:1630px;top:822px;width:80px;text-align:center;font-size:15px;line-height:15px;color:#6e7079">22:29</div>
<div class="a" style="left:1887px;top:822px;width:80px;text-align:center;font-size:15px;line-height:15px;color:#6e7079">22:30</div>
<div class="a" style="left:2145px;top:822px;width:80px;text-align:center;font-size:15px;line-height:15px;color:#6e7079">22:31</div>
<div class="a" style="left:1076px;top:1073px;width:80px;text-align:center;font-size:15px;line-height:15px;color:#6e7079">22:26</div>
<div class="a" style="left:1115px;top:1073px;width:80px;text-align:center;font-size:15px;line-height:15px;color:#6e7079">22:27</div>
<div class="a" style="left:1372px;top:1073px;width:80px;text-align:center;font-size:15px;line-height:15px;color:#6e7079">22:28</div>
<div class="a" style="left:1630px;top:1073px;width:80px;text-align:center;font-size:15px;line-height:15px;color:#6e7079">22:29</div>
<div class="a" style="left:1887px;top:1073px;width:80px;text-align:center;font-size:15px;line-height:15px;color:#6e7079">22:30</div>
<div class="a" style="left:2145px;top:1073px;width:80px;text-align:center;font-size:15px;line-height:15px;color:#6e7079">22:31</div>
<div class="a" style="left:1249px;top:878px;font-size:15px;line-height:15px;color:#333;">所有协议</div>
<div class="a" style="left:1339px;top:878px;font-size:15px;line-height:15px;color:#c8c8c8;">HTTP协议</div>
<div class="a" style="left:1437px;top:878px;font-size:15px;line-height:15px;color:#c8c8c8;">网络视频</div>
<div class="a" style="left:1526px;top:878px;font-size:15px;line-height:15px;color:#c8c8c8;">网络游戏</div>
<div class="a" style="left:1616px;top:878px;font-size:15px;line-height:15px;color:#c8c8c8;">网络下载</div>
<div class="a" style="left:1704px;top:878px;font-size:15px;line-height:15px;color:#c8c8c8;">文件传输</div>
<div class="a" style="left:1795px;top:878px;font-size:15px;line-height:15px;color:#c8c8c8;">网络通讯</div>
<div class="a" style="left:1884px;top:878px;font-size:15px;line-height:15px;color:#c8c8c8;">常用协议</div>
<div class="a" style="left:1974px;top:878px;font-size:15px;line-height:15px;color:#c8c8c8;">其它应用</div>
<div class="a" style="left:2063px;top:878px;font-size:15px;line-height:15px;color:#c8c8c8;">测速软件</div>
<div class="a" style="left:2153px;top:878px;font-size:15px;line-height:15px;color:#c8c8c8;">未知应用</div>
<!-- /row3 -->
<!-- footer -->
<div class="a" style="left:187px;top:1157px;width:2353px;height:1px;background:#e6e6e6"></div>
<div class="a" style="left:1322px;top:1184px;font-size:15px;line-height:15px;color:#333">© 2021 iKuai</div>
</body></html>
